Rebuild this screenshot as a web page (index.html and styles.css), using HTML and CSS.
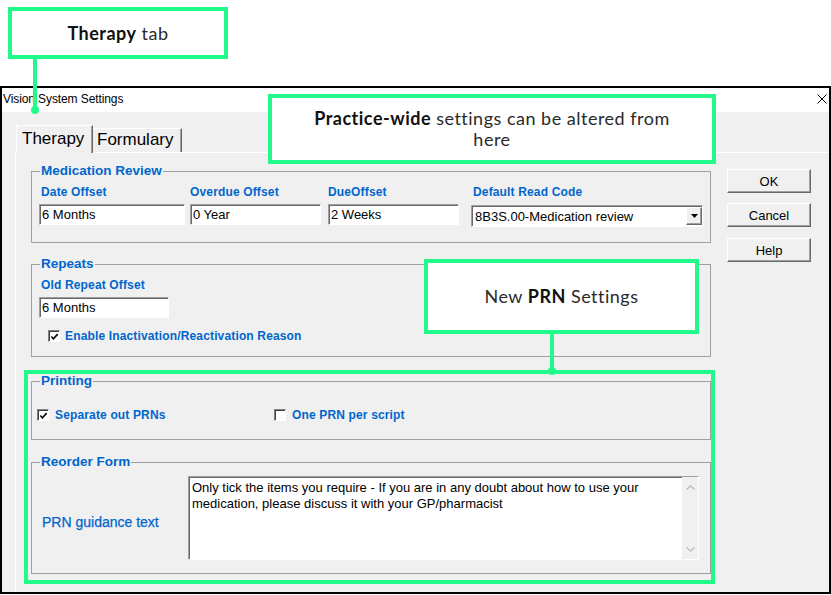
FILE: index.html
```html
<!DOCTYPE html>
<html>
<head>
<meta charset="utf-8">
<link rel="stylesheet" href="styles.css">
</head>
<body>
<div class="page">
  <div class="top">
    <div class="callout c-tab"><span><b>Therapy</b> tab</span></div>
  </div>
  <div class="window">
    <div class="titlebar">
      <span class="title">Vision System Settings</span>
      <svg class="close" width="10" height="10" viewBox="0 0 10 10"><path d="M0.5 0.5 L9.5 9.5 M9.5 0.5 L0.5 9.5" stroke="#000" stroke-width="1" fill="none"/></svg>
    </div>
    <div class="client">
      <div class="tabs">
        <div class="tab tab-sel">Therapy</div>
        <div class="tab tab-other">Formulary</div>
      </div>
      <div class="panel">
        <div class="groups">
          <fieldset class="grp f-med">
            <legend>Medication Review</legend>
            <div class="med-row">
              <div class="col c1">
                <div class="lbl lp2">Date Offset</div>
                <div class="inp">6 Months</div>
              </div>
              <div class="col c2">
                <div class="lbl">Overdue Offset</div>
                <div class="inp">0 Year</div>
              </div>
              <div class="col c3">
                <div class="lbl">DueOffset</div>
                <div class="inp">2 Weeks</div>
              </div>
              <div class="col c4">
                <div class="lbl lp2">Default Read Code</div>
                <div class="inp dropdown">
                  <span>8B3S.00-Medication review</span>
                  <span class="drop-btn"><svg width="7" height="4" viewBox="0 0 7 4"><polygon points="0,0 7,0 3.5,4" fill="#000"/></svg></span>
                </div>
              </div>
            </div>
          </fieldset>

          <fieldset class="grp f-rep">
            <legend>Repeats</legend>
            <div class="lbl lbl-rep">Old Repeat Offset</div>
            <div class="inp inp-rep">6 Months</div>
            <div class="chkrow chk-rep">
              <span class="chk"><svg width="10" height="10" viewBox="0 0 10 10"><polyline points="1.5,4.5 3.8,7 8.5,1.8" stroke="#000" stroke-width="1.7" fill="none"/></svg></span>
              <span class="lbl chk-lbl">Enable Inactivation/Reactivation Reason</span>
            </div>
          </fieldset>

          <fieldset class="grp f-prn">
            <legend>Printing</legend>
            <div class="prn-row">
              <div class="chkrow prn-item1">
                <span class="chk"><svg width="10" height="10" viewBox="0 0 10 10"><polyline points="1.5,4.5 3.8,7 8.5,1.8" stroke="#000" stroke-width="1.7" fill="none"/></svg></span>
                <span class="lbl chk-lbl2">Separate out PRNs</span>
              </div>
              <div class="chkrow">
                <span class="chk"></span>
                <span class="lbl chk-lbl2">One PRN per script</span>
              </div>
            </div>
          </fieldset>

          <fieldset class="grp f-reo">
            <legend>Reorder Form</legend>
            <div class="reo-row">
              <div class="guid-lbl">PRN guidance text</div>
              <div class="memo">
                <div class="memo-text">Only tick the items you require - If you are in any doubt about how to use your<br>medication, please discuss it with your GP/pharmacist</div>
                <div class="scroll">
                  <svg width="9" height="5" viewBox="0 0 9 5"><polyline points="0.5,4.5 4.5,0.8 8.5,4.5" stroke="#b8b8b8" stroke-width="1.2" fill="none"/></svg>
                  <svg width="9" height="5" viewBox="0 0 9 5"><polyline points="0.5,0.5 4.5,4.2 8.5,0.5" stroke="#b8b8b8" stroke-width="1.2" fill="none"/></svg>
                </div>
              </div>
            </div>
          </fieldset>
        </div>
        <div class="buttons">
          <div class="btn">OK</div>
          <div class="btn">Cancel</div>
          <div class="btn">Help</div>
        </div>
      </div>
    </div>
  </div>

  <div class="conn conn1"></div>
  <div class="dot dot1"></div>
  <div class="callout c-practice"><span><b>Practice-wide</b> settings can be altered from<br>here</span></div>
  <div class="callout c-prn"><span>New <b>PRN</b> Settings</span></div>
  <div class="conn conn2"></div>
  <div class="dot dot2"></div>
  <div class="prn-frame"></div>
</div>
</body>
</html>
```

FILE: styles.css
```css
body {
  margin: 0;
  background: #fff;
}

.page {
  position: relative;
  width: 831px;
  height: 595px;
  overflow: hidden;
  font-family: "Liberation Sans", Arial, sans-serif;
  color: #000;
}

.top {
  height: 86px;
  padding: 7px 0 0 8px;
  box-sizing: border-box;
}

.callout {
  box-sizing: border-box;
  border: 4px solid #22f98b;
  background: #fff;
  font-family: Lato, "Open Sans", sans-serif;
  font-size: 18px;
  letter-spacing: 0.5px;
  line-height: 21px;
  color: #2a2a2a;
  display: flex;
  align-items: center;
  justify-content: center;
  text-align: center;
}

.callout b {
  color: #111;
  font-weight: 700;
}

.c-tab {
  width: 220px;
  height: 52px;
}

.c-practice {
  position: absolute;
  left: 268px;
  top: 94px;
  width: 448px;
  height: 70px;
  z-index: 5;
}

.c-prn {
  position: absolute;
  left: 424px;
  top: 259px;
  width: 275px;
  height: 75px;
  z-index: 5;
}

.prn-frame {
  position: absolute;
  left: 24px;
  top: 370px;
  width: 691px;
  height: 214px;
  box-sizing: border-box;
  border: 4px solid #22f98b;
  z-index: 5;
}

.conn {
  position: absolute;
  width: 4px;
  background: #22f98b;
  z-index: 6;
}

.conn1 {
  left: 33px;
  top: 58px;
  height: 52px;
}

.conn2 {
  left: 550px;
  top: 333px;
  height: 38px;
}

.dot {
  position: absolute;
  width: 8px;
  height: 8px;
  border-radius: 50%;
  background: #22f98b;
  z-index: 6;
}

.dot1 {
  left: 31px;
  top: 106px;
}

.dot2 {
  left: 548px;
  top: 367px;
}

/* window */
.window {
  box-sizing: border-box;
  width: 831px;
  height: 508px;
  border: 2px solid #000;
  display: flex;
  flex-direction: column;
}

.titlebar {
  height: 24px;
  flex: none;
  background: #fff;
  display: flex;
  align-items: center;
  justify-content: space-between;
  padding: 0 2px 0 1px;
}

.title {
  font-size: 12px;
  line-height: 22px;
  margin-bottom: 2px;
  letter-spacing: -0.1px;
}

.close {
  margin-bottom: 2px;
}

.client {
  flex: 1;
  background: #f0f0f0;
  display: flex;
  flex-direction: column;
  min-height: 0;
}

.tabs {
  display: flex;
  align-items: flex-end;
  height: 27px;
  margin-top: 13px;
  padding-left: 14px;
  flex: none;
}

.tab {
  box-sizing: border-box;
  font-size: 17px;
  line-height: 22px;
  background: #f0f0f0;
  white-space: nowrap;
}

.tab-sel {
  width: 77px;
  height: 28px;
  margin-bottom: -1px;
  position: relative;
  z-index: 1;
  border-top: 1px solid #fff;
  border-left: 1px solid #fff;
  border-right: 1px solid #696969;
  box-shadow: inset -1px 0 #a0a0a0;
  padding: 2px 0 0 5px;
}

.tab-other {
  width: 89px;
  height: 24px;
  border-top: 1px solid #fff;
  border-right: 1px solid #696969;
  box-shadow: inset -1px 0 #a0a0a0;
  padding: 0 0 0 4px;
}

.panel {
  flex: 1;
  margin-left: 13px;
  border-top: 1px solid #fff;
  border-left: 1px solid #fff;
  display: flex;
  align-items: flex-start;
  min-height: 0;
}

.groups {
  width: 680px;
  margin-left: 15px;
  flex: none;
}

.buttons {
  margin-left: 16px;
  margin-top: 16px;
  display: flex;
  flex-direction: column;
  gap: 10px;
}

.btn {
  width: 84px;
  height: 24px;
  box-sizing: border-box;
  border: 1px solid;
  border-color: #fff #696969 #696969 #fff;
  box-shadow: inset -1px -1px #a0a0a0;
  font-size: 13px;
  display: flex;
  align-items: center;
  justify-content: center;
}

.btn + .btn:last-child {
  margin-top: 1px;
}

/* group boxes */
.grp {
  margin: 0;
  padding: 0;
  border: 1px solid #a0a0a0;
  min-width: 0;
  box-sizing: border-box;
  width: 680px;
}

.grp legend {
  font-size: 13.5px;
  font-weight: bold;
  color: #0066cc;
  line-height: 16px;
  padding: 0 1px;
  margin-left: 8px;
}

.f-med {
  margin-top: 10px;
  padding-bottom: 15px;
}

.f-rep {
  margin-top: 13px;
  padding-bottom: 13px;
}

.f-prn {
  margin-top: 16px;
  padding-bottom: 17px;
}

.f-reo {
  margin-top: 14px;
  padding-bottom: 13px;
}

.lbl {
  font-size: 12px;
  font-weight: bold;
  color: #0066cc;
  line-height: 14px;
  letter-spacing: 0.15px;
  white-space: nowrap;
}

.lp2 {
  padding-left: 2px;
}

.med-row {
  display: flex;
  align-items: flex-start;
}

.col .lbl {
  margin-top: 6px;
}

.c1 { width: 146px; margin-left: 7px; }
.c2 { width: 131px; margin-left: 5px; }
.c3 { width: 131px; margin-left: 7px; }
.c4 { width: 232px; margin-left: 12px; }

.inp {
  box-sizing: border-box;
  height: 21px;
  margin-top: 5px;
  background: #fff;
  border: 1px solid;
  border-color: #a0a0a0 #fff #fff #a0a0a0;
  box-shadow: inset 1px 1px #696969;
  font-size: 13px;
  line-height: 19px;
  padding-left: 2px;
  white-space: nowrap;
}

.dropdown {
  height: 22px;
  margin-top: 6px;
  display: flex;
  align-items: center;
  justify-content: space-between;
  padding-left: 3px;
}

.drop-btn {
  width: 16px;
  height: 18px;
  box-sizing: border-box;
  border: 1px solid;
  border-color: #fff #696969 #696969 #fff;
  box-shadow: inset -1px -1px #a0a0a0;
  background: #f0f0f0;
  display: flex;
  align-items: center;
  justify-content: center;
}

.lbl-rep {
  margin-left: 9px;
  margin-top: 6px;
}

.inp-rep {
  width: 130px;
  margin-left: 7px;
  margin-top: 5px;
}

.chkrow {
  display: flex;
  align-items: center;
  height: 14px;
}

.chk-rep {
  margin-top: 11px;
  margin-left: 16px;
}

.chk {
  box-sizing: border-box;
  width: 12px;
  height: 12px;
  background: #fff;
  border: 1px solid;
  border-color: #808080 #fff #fff #808080;
  box-shadow: inset 1px 1px #404040;
  display: flex;
  align-items: center;
  justify-content: center;
  flex: none;
}

.chk svg {
  margin: 1px 0 0 1px;
}

.chk-lbl {
  margin-left: 5px;
}

.chk-lbl2 {
  margin-left: 6px;
}

.prn-row {
  display: flex;
  margin-top: 19px;
  margin-left: 5px;
}

.prn-item1 {
  width: 237px;
}

.reo-row {
  display: flex;
  align-items: center;
  margin-top: 6px;
  margin-left: 10px;
}

.guid-lbl {
  width: 146px;
  font-size: 14px;
  color: #0066cc;
  line-height: 16px;
  padding-top: 8px;
  -webkit-text-stroke: 0.25px #0066cc;
}

.memo {
  width: 511px;
  height: 84px;
  box-sizing: border-box;
  background: #fff;
  border: 1px solid;
  border-color: #a0a0a0 #fff #fff #a0a0a0;
  box-shadow: inset 1px 1px #696969;
  display: flex;
}

.memo-text {
  flex: 1;
  font-size: 13px;
  line-height: 16px;
  padding: 3px 0 0 3px;
  white-space: nowrap;
}

.scroll {
  width: 16px;
  background: #f0f0f0;
  display: flex;
  flex-direction: column;
  justify-content: space-between;
  align-items: center;
  padding: 8px 0 7px;
  box-sizing: border-box;
}
```
